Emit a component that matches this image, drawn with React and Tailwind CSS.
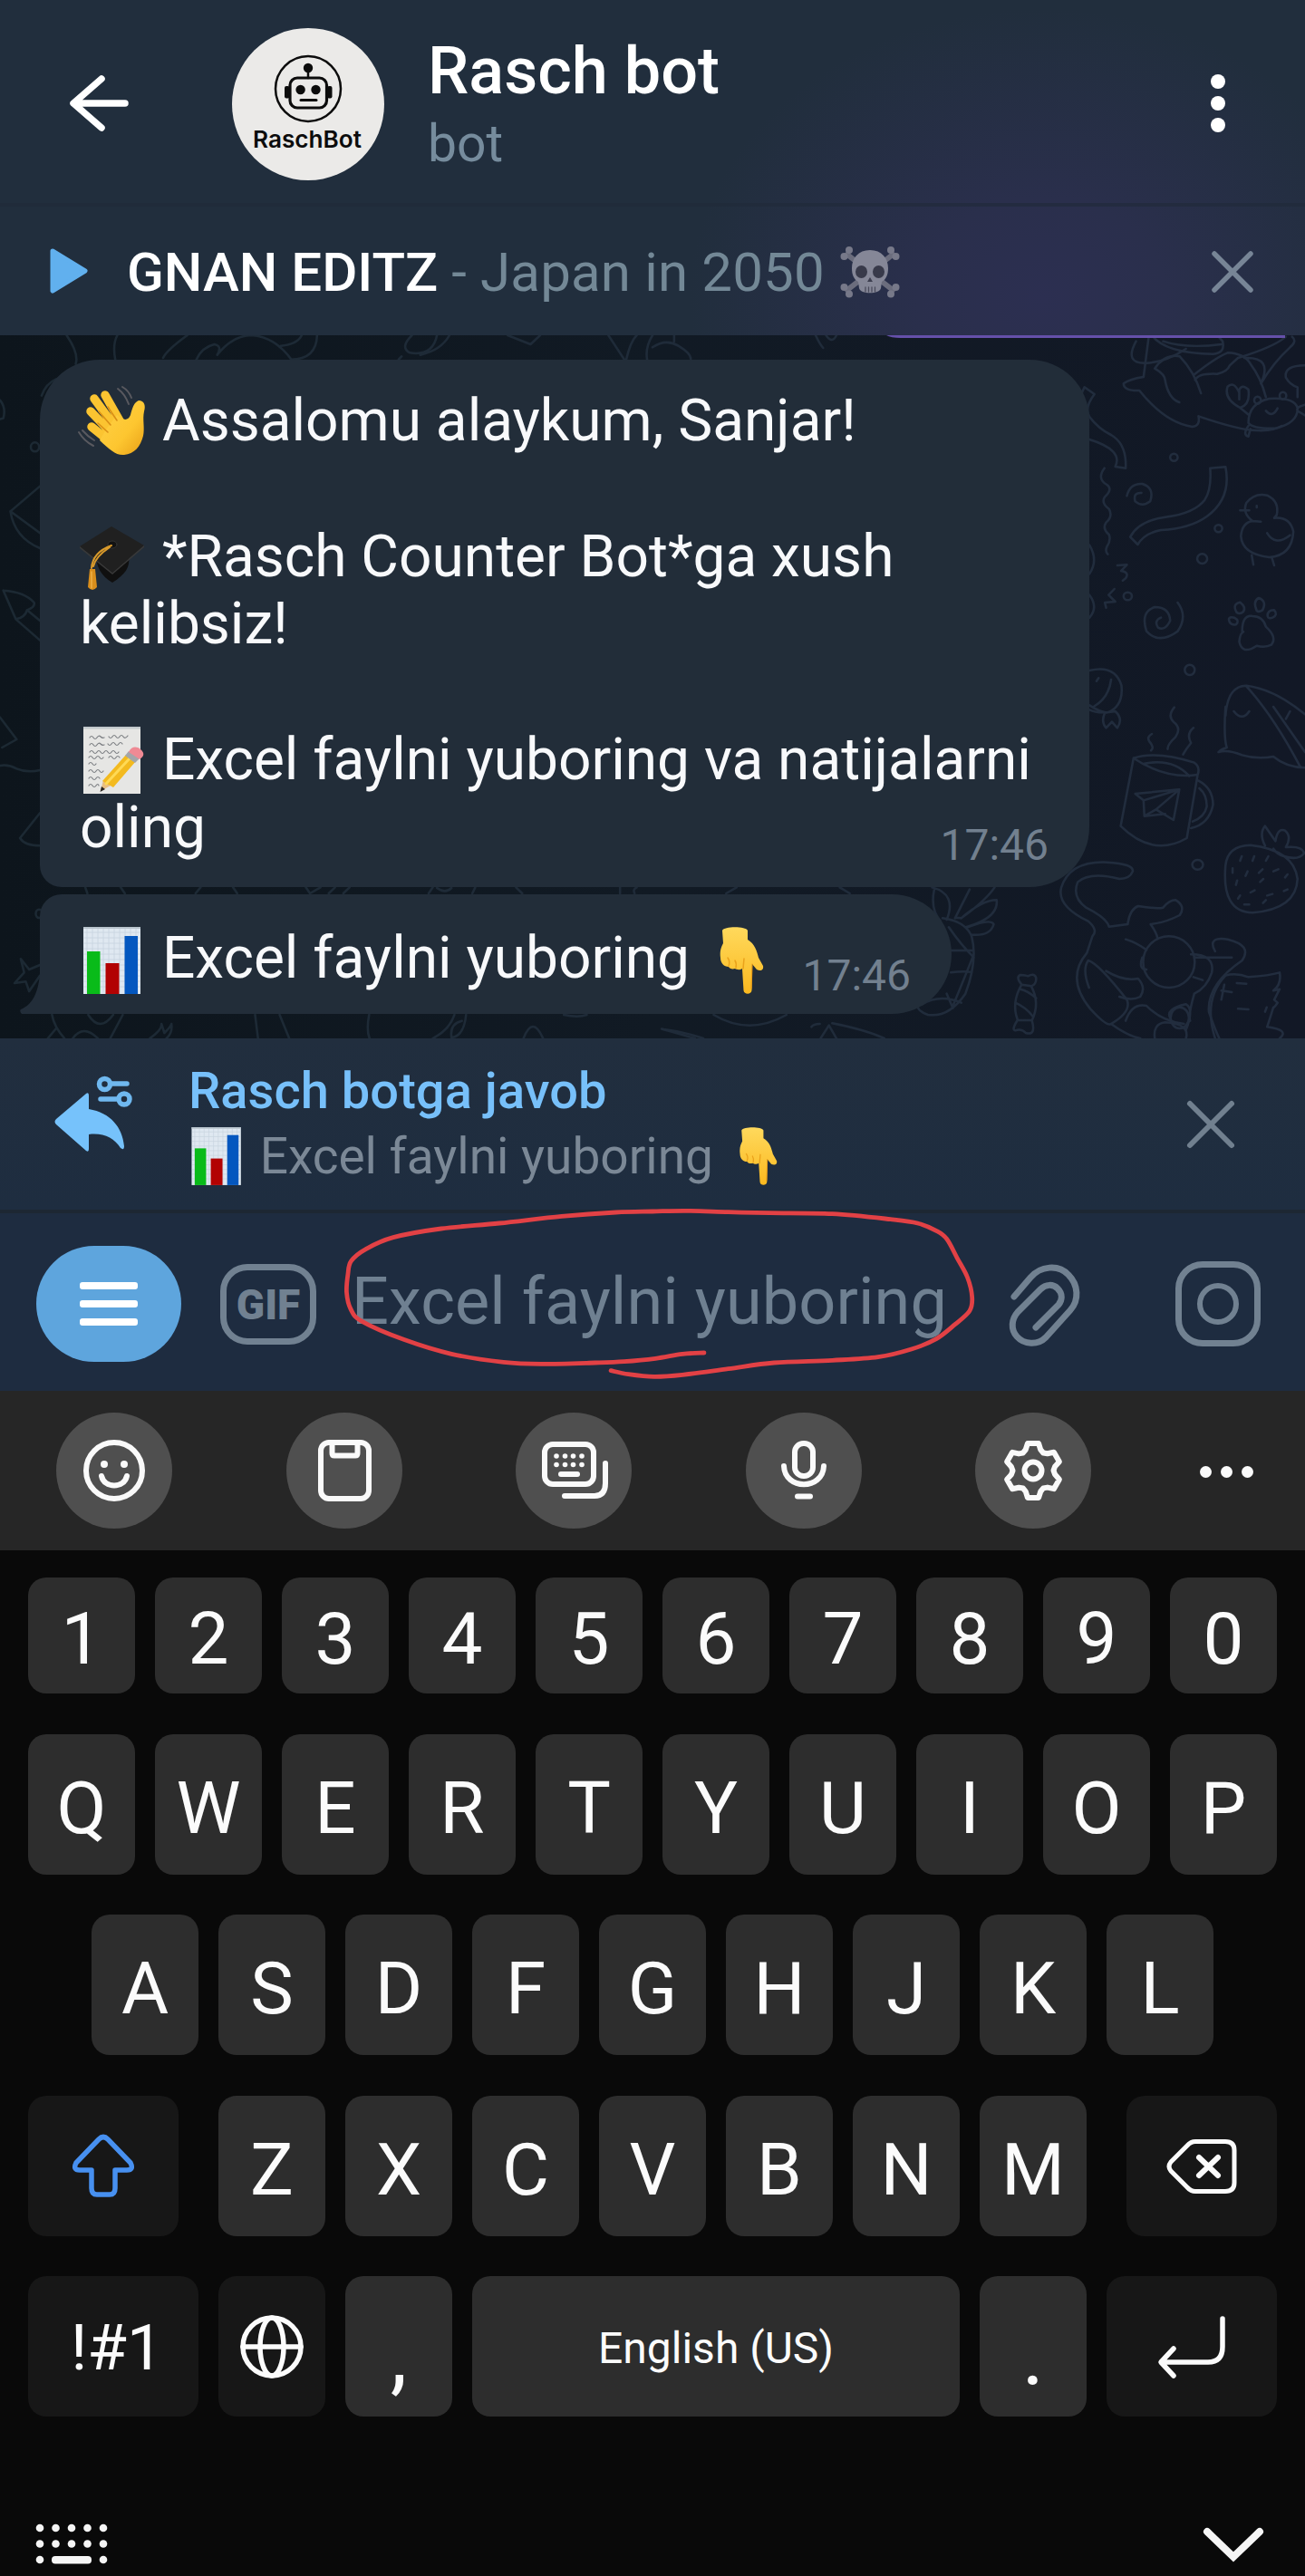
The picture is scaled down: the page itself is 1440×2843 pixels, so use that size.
import React from "react";

const svgBase = { fill: "none", strokeLinecap: "round", strokeLinejoin: "round" };

// Turns a list of points into a smooth path (Catmull-Rom to cubic Bezier).
function smooth(points) {
  let d = `M${points[0][0]} ${points[0][1]}`;
  for (let i = 0; i < points.length - 1; i++) {
    const p0 = points[i - 1] || points[i];
    const p1 = points[i];
    const p2 = points[i + 1];
    const p3 = points[i + 2] || p2;
    const c1 = [p1[0] + (p2[0] - p0[0]) / 6, p1[1] + (p2[1] - p0[1]) / 6];
    const c2 = [p2[0] - (p3[0] - p1[0]) / 6, p2[1] - (p3[1] - p1[1]) / 6];
    d += ` C${c1[0]} ${c1[1]} ${c2[0]} ${c2[1]} ${p2[0]} ${p2[1]}`;
  }
  return d;
}

/* ---------- Emoji drawings ---------- */

const EMOJI_LG = "inline w-[73px] h-[74px] -my-[6px] mr-[2px] align-[-12px] overflow-visible";
const EMOJI_SM = "inline w-[63px] h-[64px] -my-[6px] mr-[2px] align-[-7px] overflow-visible";

function WaveEmoji() {
  return (
    <svg viewBox="0 0 73 74" className={EMOJI_LG} {...svgBase}>
      <defs>
        <linearGradient id="wave" x1="0" y1="0" x2="1" y2="1">
          <stop offset="0" stopColor="#ffd24a" />
          <stop offset="0.6" stopColor="#fdc630" />
          <stop offset="1" stopColor="#e89f16" />
        </linearGradient>
      </defs>
      <path d="M42 -1 Q50 5 54 16 M47 -3 Q54 1 57 9" stroke="#59595f" strokeWidth="2" />
      <path d="M-1 47 Q5 57 15 62 M3 45 Q9 52 16 56" stroke="#59595f" strokeWidth="2" />
      <path d="M28 6 L45 36 M16 10 L38 40 M12 24 L34 47 M13 41 L34 58" stroke="#fbc431" strokeWidth="9.5" />
      <path d="M29 44 L41 28 C48 34 53 35 56 28 C58 20 60 14 65 12 C71 12 73 17 71 24 C69 33 72 42 70 51 C67 63 60 71 49 72 C40 73 33 66 22 56 Z" fill="url(#wave)" />
      <path d="M31 19 L41 34 M21 24 L34 39 M20 37 L31 47" stroke="#d98f16" strokeWidth="1.6" />
    </svg>
  );
}

function CapEmoji() {
  return (
    <svg viewBox="0 0 73 74" className={EMOJI_LG} {...svgBase}>
      <path d="M18 32 L54 34 C56 46 50 54 36 63 C24 56 18 46 18 32 Z" fill="#101010" />
      <path d="M35 1 L71 22 L36 52 L0 23 Z" fill="#202020" />
      <path d="M0 23 L36 52 L71 22 L71 24 L36 54 L0 25 Z" fill="#383838" />
      <ellipse cx="36" cy="21" rx="5" ry="4" fill="#121212" stroke="#333333" strokeWidth="1" />
      <path d="M35 22 C24 26 14 33 13 47 M33 24 C24 30 17 36 15 45" stroke="#d99a2b" strokeWidth="2" />
      <path d="M11 48 H17 L19 68 Q14 74 9 68 Z" fill="#d98e1c" />
      <path d="M13 51 V69" stroke="#f0b44a" strokeWidth="1.4" />
    </svg>
  );
}

function MemoEmoji() {
  return (
    <svg viewBox="0 0 73 74" className={EMOJI_LG} {...svgBase}>
      <rect x="4" y="-2" width="63" height="74" fill="#e6e6e4" />
      <rect x="4" y="-2" width="63" height="2.5" fill="#c3c9cc" />
      <path
        d="M11 10 q2 -3 4 0 t4 0 t4 -1 t4 1 M32 9 q2 3 4 0 t4 0 t4 0 t4 0 t5 -1 M11 18 q2 -3 4 0 t4 0 t4 -1 t4 1 M31 17 q2 3 4 0 t4 0 t4 0 t4 0 M11 26 q2 -3 4 0 t4 0 t4 0 t4 0 t4 0 t4 0 t4 0 t4 0 M10 32 q2 -3 4 0 t4 0 t4 0 t4 0 M32 32 q2 -3 4 0 t4 0 t4 0 M10 39 q2 -3 4 0 t4 0 M10 47 q2 -3 4 0 t4 0 t4 0 t4 0 M10 55 q2 -3 4 0 t4 0 t4 0 M10 63 q2 -3 4 0 t4 0 t3 0"
        stroke="#7b7e82"
        strokeWidth="1.2"
      />
      <path d="M23 69 L26 57 L34 63 Z" fill="#e8bd82" />
      <path d="M22.500 70 L24 64 L28 67 Z" fill="#2b2622" />
      <path d="M25 58 L51 29 L62 36 L37 65 Z" fill="#f3ba1f" />
      <path d="M29 61 L56 32" stroke="#ffda55" strokeWidth="3" />
      <path d="M50 30 L54 25 L66 33 L61 38 Z" fill="#a3a6aa" />
      <path d="M54 26 C57 20 62 19 67 23 C72 27 71 31 66 34 Z" fill="#ef8a94" />
    </svg>
  );
}

function ChartEmoji({ className = EMOJI_LG }) {
  return (
    <svg viewBox="0 0 73 74" className={className} {...svgBase}>
      <rect x="4" y="0" width="63" height="74" fill="#dfe8f1" />
      <path
        d="M8 2 V72 M14 2 V72 M20 2 V72 M26 2 V72 M32 2 V72 M38 2 V72 M44 2 V72 M50 2 V72 M56 2 V72 M62 2 V72 M5 6 H66 M5 12 H66 M5 18 H66 M5 24 H66 M5 30 H66 M5 36 H66 M5 42 H66 M5 48 H66 M5 54 H66 M5 60 H66 M5 66 H66"
        stroke="#c7d3df"
        strokeWidth="0.8"
      />
      <rect x="4" y="0" width="63" height="2" fill="#b9c4cd" />
      <rect x="8" y="27" width="14.500" height="47" fill="#09bb19" />
      <rect x="28.500" y="40" width="15" height="34" fill="#b20202" />
      <rect x="49.500" y="10" width="14.500" height="64" fill="#0457bf" />
    </svg>
  );
}

function PointDownEmoji({ className = EMOJI_LG }) {
  return (
    <svg viewBox="-2 0 73 74" className={className} {...svgBase}>
      <defs>
        <linearGradient id="point" x1="0" y1="0" x2="0" y2="1">
          <stop offset="0" stopColor="#ffd95c" />
          <stop offset="1" stopColor="#fbb91f" />
        </linearGradient>
      </defs>
      <path
        d="M18 4 C20 -1 44 -1 46 4 L46 14 C54 19 56 26 58 34 L63 43 C64 48 60 49 56 47 L51 41 L50.500 70 C50 75 42 75 41.500 70 L40 46 C37 48 34 47 32 46 C29 47 26 46 25 44 C20 44 16 40 16 34 C15 26 17 22 19 18 Z"
        fill="url(#point)"
      />
      <path d="M25 43 Q27 38 24 34 M33 45 Q34 40 32 37 M41 46 L42 35" stroke="#eaa21b" strokeWidth="1.500" />
      <path d="M51 41 L50 68" stroke="#e89c18" strokeWidth="1.200" />
    </svg>
  );
}

function SkullEmoji() {
  return (
    <svg viewBox="0 0 66 57" className="w-[66px] h-[57px] ml-[2px] mb-[1px]" {...svgBase}>
      <path d="M8 9 L58 48 M58 9 L8 48" stroke="#6b6d7d" strokeWidth="6" />
      <g fill="#777989">
        <circle cx="10" cy="4" r="4" />
        <circle cx="4.500" cy="11" r="4" />
        <circle cx="56" cy="4" r="4" />
        <circle cx="61.500" cy="11" r="4" />
        <circle cx="4.500" cy="45" r="4" />
        <circle cx="10" cy="52.500" r="4" />
        <circle cx="61.500" cy="45" r="4" />
        <circle cx="56" cy="52.500" r="4" />
      </g>
      <path
        d="M33 4 C46 4 53 13 53 24 C53 31 51 36 46 39 L45 46 C44 53 22 53 21 46 L20 39 C15 36 13 31 13 24 C13 13 20 4 33 4 Z"
        fill="#858797"
      />
      <ellipse cx="23.500" cy="28" rx="6.500" ry="7" fill="#383a4a" />
      <ellipse cx="42.500" cy="28" rx="6.500" ry="7" fill="#383a4a" />
      <path d="M33 34 L30 39 H36 Z" fill="#3d3f50" />
      <path d="M28 45 V50 M31.500 45 V50 M35 45 V50 M38.500 45 V50" stroke="#4a4c5c" strokeWidth="1.300" />
    </svg>
  );
}

/* ---------- Header ---------- */

function Avatar() {
  return (
    <div className="w-[168px] h-[168px] rounded-full bg-[#ebeae8] shrink-0">
      <svg viewBox="0 0 168 168" className="w-full h-full" {...svgBase}>
        <circle cx="84" cy="67" r="36" stroke="#0c0c0c" strokeWidth="2.500" />
        <circle cx="84" cy="44" r="5.200" fill="#0c0c0c" />
        <path d="M84 46 V55" stroke="#0c0c0c" strokeWidth="2.500" />
        <rect x="64" y="55" width="40.500" height="33" rx="8" stroke="#0c0c0c" strokeWidth="3.200" />
        <rect x="58" y="64" width="5.500" height="13.500" rx="2" fill="#0c0c0c" />
        <rect x="105" y="64" width="5.500" height="13.500" rx="2" fill="#0c0c0c" />
        <circle cx="75.600" cy="68" r="5.200" fill="#0c0c0c" />
        <circle cx="92.500" cy="68" r="5.200" fill="#0c0c0c" />
        <path d="M76 79.500 H93" stroke="#0c0c0c" strokeWidth="3" />
        <text
          x="83"
          y="132"
          textAnchor="middle"
          textLength="120"
          lengthAdjust="spacingAndGlyphs"
          className="font-['Inter'] font-semibold text-[26px]"
          fill="#0c0c0c"
        >
          RaschBot
        </text>
      </svg>
    </div>
  );
}

function Header() {
  return (
    <header className="flex items-start h-[228px] pl-[76px] pr-[88px] border-b-4 border-[#1f2a38]/60">
      <svg viewBox="0 0 68 64" className="w-[68px] h-[64px] mt-[82px]" {...svgBase} stroke="#ffffff" strokeWidth="7.500">
        <path d="M36 5 L5 32 L36 59 M6 32 H62" />
      </svg>
      <div className="ml-[112px] mt-[31px]">
        <Avatar />
      </div>
      <div className="ml-[48px] flex flex-col whitespace-nowrap">
        <h1 className="mt-[35px] text-[72px] leading-[88px] font-medium text-white">Rasch bot</h1>
        <p className="mt-[1px] text-[57px] leading-[70px] text-[#768c9d]">bot</p>
      </div>
      <div className="ml-auto mt-[82px] flex flex-col gap-[8px]">
        <span className="w-4 h-4 rounded-full bg-white" />
        <span className="w-4 h-4 rounded-full bg-white" />
        <span className="w-4 h-4 rounded-full bg-white" />
      </div>
    </header>
  );
}

function PlayerBar() {
  return (
    <div className="flex items-center h-[142px] pl-[54px] pr-[55px]">
      <svg viewBox="0 0 44 52" className="w-[44px] h-[52px]" {...svgBase}>
        <path d="M4 4 L40 26 L4 48 Z" fill="#61b0ee" stroke="#61b0ee" strokeWidth="5" />
      </svg>
      <div className="ml-[42px] mt-[3px] flex items-center whitespace-pre text-[60px] leading-[72px]">
        <span className="font-medium text-white">GNAN EDITZ</span>
        <span className="text-[#738896] tracking-[0.17px]"> - Japan in 2050 </span>
        <SkullEmoji />
      </div>
      <svg viewBox="0 0 50 50" className="ml-auto w-[50px] h-[50px] mt-[1px]" {...svgBase} stroke="#778596" strokeWidth="5.500">
        <path d="M5 5 L45 45 M45 5 L5 45" />
      </svg>
    </div>
  );
}

/* ---------- Chat ---------- */

const DOODLES = [
  // top edge, left side
  "M160 0 Q190 60 182 95 M277 80 Q270 30 282 0 M392 75 Q400 50 450 0 M472 80 Q485 40 515 30 Q535 35 522 65 Q560 0 605 0 Q660 5 700 80 Q760 80 762 0 M675 35 Q715 30 725 0",
  "M990 0 Q960 40 985 58 Q1040 70 1050 0 M1080 0 Q1060 50 1010 65 M965 70 L958 80 M1220 0 L1275 30 L1298 0 M1462 0 L1500 80 M1568 0 Q1550 40 1555 80 M1505 80 Q1515 20 1530 0",
  "M1568 40 Q1600 10 1630 35 Q1660 60 1660 78 M1620 20 V0 M1960 0 Q1970 30 1978 42 M1985 0 Q2000 30 2010 0",
  // left margin
  "M100 200 Q110 160 135 145 M0 215 Q15 240 8 275 L0 278 M96 500 L25 583 L96 655 M25 583 Q35 670 96 705 M8 845 L38 940 L96 1010 M8 845 Q60 850 82 885 Q85 900 65 910 Q60 935 38 940 M65 910 L96 945",
  "M0 1265 L40 1338 L5 1365 M0 1425 Q20 1420 40 1435 Q65 1450 96 1440 M96 1582 L48 1665 Q60 1690 96 1690 M96 2085 L70 2100 L50 2065 L58 2110 L35 2145 L62 2140 L70 2172 L96 2120",
  // seams under the bubbles
  "M205 1828 L210 1848 M290 1828 L300 1848 M470 1848 L482 1828 M560 1828 L570 1848 M735 1828 L745 1848 L770 1828 M790 1848 L805 1828 M825 1848 L840 1828 M1030 1848 L1040 1828 M1050 1830 Q1070 1850 1085 1830 M1135 1848 L1142 1828 M1240 1828 L1255 1848 M1490 1848 V1828 M1525 1848 Q1520 1835 1530 1828 M1745 1848 L1770 1828 M2018 1828 L2042 1848",
  "M125 2250 Q130 2290 155 2328 M295 2250 L265 2328 M212 2250 Q240 2310 272 2250 M115 2328 L135 2295 M175 2328 Q200 2280 235 2328 M360 2328 Q390 2300 388 2280 L395 2310 Q410 2290 412 2280 Q415 2310 400 2328 M613 2250 L620 2328 M672 2250 L695 2328 M887 2250 Q880 2300 888 2328 M1092 2250 Q1080 2300 1040 2328 M1120 2250 Q1115 2320 1085 2325 Q1080 2280 1110 2270 M1258 2328 Q1280 2250 1305 2328 M1355 2250 Q1390 2260 1410 2250",
  "M1715 2250 Q1800 2320 1890 2250 M1670 2328 Q1570 2290 1595 2298 Q1640 2305 1690 2328 M1950 2290 Q1955 2280 1970 2280 M1972 2328 L1992 2285 L2010 2328 M2000 2278 Q2080 2300 2125 2328",
  // bird, bow and crab
  "M2768 0 Q2800 60 2915 62 Q2945 60 2938 20 L2925 0 M2795 20 Q2850 45 2935 30 M2730 20 Q2700 95 2755 92 Q2800 90 2850 45 M2760 10 L2748 138 Q2715 145 2700 160 Q2700 185 2738 183 Q2800 290 2865 303 Q2885 300 2880 268 Q2980 315 3020 315 Q3060 318 3080 300",
  "M2775 110 Q2800 60 2835 70 Q2870 120 2886 192 M2775 110 Q2800 130 2800 150 Q2808 210 2834 222 M2870 130 Q2920 75 2950 58 Q2990 60 3005 95 Q3030 140 3042 205 M2872 148 Q2880 125 2925 128 Q2950 120 2955 100 L2975 75 Q3060 40 3090 5 M2990 75 Q3060 70 3030 160 Q3060 90 3100 40 Q3118 20 3105 5",
  "M3000 290 Q3000 225 3050 210 Q3110 205 3118 240 Q3120 290 3065 308 Q3010 310 3000 290 M3042 250 Q3058 275 3070 242 M2980 240 Q2940 210 2950 170 Q2965 150 2978 190 V212 V180 Q2985 160 3000 180 Q3005 230 2980 240 L3002 265 M3136 100 Q3085 100 3090 140 Q3100 165 3118 172 V205 M3000 300 Q2985 330 3000 335 L3005 310 M3136 230 Q3110 240 3120 252 L3136 265",
  // ribbons, spirals, squiggles
  "M2600 190 L2606 172 L2630 195 Q2605 240 2618 270 Q2640 310 2670 330 Q2708 360 2705 440 L2680 435 Q2700 380 2618 345 M2908 440 L2945 436 Q2960 540 2900 600 Q2860 640 2790 645 Q2750 655 2734 693 L2716 668 Q2735 615 2800 602 Q2870 590 2895 545 Q2912 510 2908 440",
  "M2654 440 Q2635 475 2660 495 Q2675 510 2655 535 Q2645 555 2665 575 Q2675 600 2658 620 Q2648 640 2665 660 Q2670 680 2660 700 Q2655 715 2662 725 M2708 532 Q2715 490 2745 492 Q2775 505 2764 550 Q2745 570 2728 550 Q2722 520 2743 522 M2830 885 Q2855 930 2830 980 Q2785 1025 2755 980 Q2740 915 2775 900 Q2810 900 2812 945 Q2800 980 2783 968 Q2772 945 2790 935",
  "M2685 762 L2708 760 L2694 780 Q2715 785 2705 805 L2698 812 M2678 840 L2664 860 L2680 882 L2655 885 L2658 902 M2618 695 Q2640 745 2618 790 M2618 860 Q2640 900 2618 935",
  // chick
  "M3010 615 Q2985 590 2995 555 Q3015 520 3045 530 Q3075 550 3068 595 L3062 605 Q3100 600 3108 650 Q3105 730 3050 735 Q2985 725 2982 665 Q2985 620 3010 615 L3030 617 M2980 580 H3002 M3020 565 V570 M3045 655 Q3065 700 3100 662 M3008 728 L3012 760 M3056 735 L3062 762",
  // paw
  "M2985 980 Q2985 925 3010 930 Q3035 930 3042 965 Q3070 1000 3055 1025 Q3040 1035 3020 1028 Q2985 1060 2978 1015 Q2980 985 2988 982 M2972 918 Q2960 890 2980 884 Q2995 900 2988 915 Q2980 925 2972 918 M3020 912 Q3010 880 3025 870 Q3045 880 3034 910 Q3025 918 3020 912 M3046 930 Q3045 910 3062 910 Q3072 925 3058 935 Q3048 940 3046 930 M2955 950 Q2948 930 2966 935 Q2980 945 2970 958 Q2960 960 2955 950",
  // candy, shell
  "M2618 1110 Q2680 1090 2695 1160 Q2700 1230 2660 1250 Q2640 1245 2618 1225 M2670 1140 Q2665 1200 2628 1230 M2640 1135 L2635 1145 M2618 1240 Q2640 1255 2680 1245 Q2700 1270 2685 1300 L2672 1280 L2658 1300 Q2645 1280 2655 1250 M2945 1260 Q2950 1160 2995 1160 Q3060 1170 3136 1255 M2995 1162 Q3060 1260 3125 1430 M2945 1230 Q2940 1330 2948 1365 Q2935 1370 2928 1380 Q2950 1370 2985 1390 Q3020 1405 3060 1395 Q3090 1430 3136 1432 M2965 1245 Q2985 1280 3002 1245 M3090 1270 L3100 1245 M3060 1230 L3136 1380",
  // mug with paper plane
  "M2724 1400 Q2780 1375 2870 1415 Q2885 1430 2878 1455 Q2800 1470 2724 1400 L2693 1625 Q2770 1730 2852 1665 L2878 1455 M2750 1418 Q2820 1400 2858 1460 M2880 1475 Q2915 1500 2915 1555 Q2905 1620 2862 1632 M2882 1500 Q2900 1520 2900 1560 Q2895 1595 2866 1610 M2728 1518 L2834 1504 L2820 1605 L2778 1570 L2834 1504 L2748 1540 Z M2748 1540 L2750 1592 L2778 1570 M2750 1592 L2800 1585 M2766 1375 Q2775 1365 2762 1345 Q2755 1330 2768 1320 M2806 1370 Q2805 1355 2825 1330 Q2840 1300 2820 1280 Q2805 1260 2822 1232 M2843 1388 Q2850 1370 2862 1350 Q2850 1320 2868 1300",
  // strawberry
  "M2945 1755 Q2950 1690 3005 1688 Q3110 1705 3118 1800 Q3115 1900 3010 1912 Q2935 1910 2945 1755 M3040 1690 Q3025 1650 3040 1625 L3065 1675 Q3070 1630 3088 1640 Q3105 1660 3090 1695 Q3130 1690 3134 1715 Q3120 1740 3085 1725 Q3070 1720 3060 1700",
  "M2980 1740 L2984 1725 M3010 1740 L3014 1725 M3042 1740 L3048 1725 M2962 1780 V1765 M2993 1790 L2998 1775 M3025 1780 L3034 1768 M3060 1775 L3072 1768 M2970 1820 L2973 1805 M3028 1810 L3036 1800 M3088 1795 L3094 1785 M2975 1865 L2980 1855 M3005 1845 L3015 1838 M3045 1855 L3058 1850 M3085 1840 L3094 1835 M2990 1885 H3002 M3035 1880 L3042 1870",
  // pineapple
  "M2245 1835 Q2235 1900 2260 1940 M2240 1828 Q2300 1850 2275 1935 M2390 1828 Q2370 1870 2310 1930 L2296 1928 M2330 1835 L2295 1930 M2310 1930 Q2360 1870 2395 1870 Q2400 1930 2320 1960 M2325 1960 Q2380 1930 2388 1950 Q2380 1990 2335 1985 M2265 1930 Q2320 1940 2335 1990 Q2350 2070 2320 2180 Q2280 2260 2230 2250 Q2210 2240 2205 2225 M2280 1960 Q2310 2020 2340 2060 M2285 2037 H2338 M2285 2110 Q2310 2105 2335 2108 M2215 2215 Q2260 2180 2310 2210 M2275 2180 L2290 2228 M2340 2050 Q2320 2120 2290 2220",
  // wrapped sweet
  "M2455 2150 Q2440 2125 2452 2118 Q2468 2120 2470 2122 Q2488 2110 2490 2130 Q2490 2150 2478 2155 Z M2455 2150 Q2430 2210 2445 2265 M2478 2155 Q2500 2210 2480 2268 L2445 2268 Q2430 2300 2440 2302 Q2455 2295 2465 2310 Q2490 2320 2480 2270 M2452 2165 Q2470 2170 2490 2195 M2440 2210 Q2465 2225 2482 2255",
  // cat
  "M2625 1990 Q2640 1970 2615 1940 Q2540 1890 2550 1830 Q2570 1740 2660 1745 Q2725 1750 2722 1775 Q2715 1800 2690 1800 Q2620 1775 2590 1810 Q2575 1860 2610 1895 Q2660 1930 2665 1958 L2710 1950 Q2715 1900 2735 1890 Q2780 1900 2795 1895 Q2810 1870 2825 1870 Q2850 1890 2835 1920 Q2800 1945 2765 1950 Q2780 1980 2782 1998 M2625 1990 L2612 2045 Q2560 2130 2620 2230 Q2660 2290 2670 2280 Q2720 2240 2708 2200 Q2640 2080 2615 2070 Q2600 2100 2617 2160",
  "M2705 2000 Q2730 2010 2755 2035 M2658 2105 Q2700 2140 2735 2130 Q2755 2160 2740 2190 Q2720 2205 2690 2190 M2705 2270 Q2720 2210 2755 2220 Q2790 2270 2845 2280 M2670 2280 Q2710 2320 2740 2328 M2775 2328 Q2770 2280 2800 2275 Q2860 2280 2850 2328 M2870 2060 H2960 M2920 2040 Q2900 1990 2950 2000 Q3010 2020 2985 2070 Q2900 2150 2905 2240 Q2920 2300 2930 2328 M2868 2125 L2890 2135 M2862 2050 Q2920 2050 2912 2110 Q2900 2160 2870 2180 Q2855 2250 2860 2270 M2812 2260 Q2800 2230 2850 2215 Q2870 2230 2850 2300 M2755 2100 Q2735 2100 2745 2060",
  // kitten
  "M2945 2120 Q2970 2110 3000 2125 Q3050 2120 3075 2110 Q3080 2150 3060 2170 L3075 2165 L3062 2200 L3070 2210 Q3060 2230 3060 2225 Q3050 2270 3045 2290 Q3100 2300 3075 2328 M2945 2120 Q2890 2200 2920 2328 M2972 2145 L2995 2147 M2975 2230 L3000 2232 M2935 2170 L2960 2175 M2942 2150 L2935 2200 M3040 2240 L3044 2225",
];

const RINGS = [
  [84, 370, 10, 15], [2821, 404, 9, 12], [2928, 640, 9, 12], [2889, 740, 12, 16], [2710, 864, 10, 13],
  [2859, 1108, 12, 17], [2878, 1753, 13, 16], [2809, 2075, 62, 85], [3022, 215, 8, 12], [3083, 200, 8, 12],
  [94, 1915, 8, 14], [2835, 2260, 22, 35],
];

function ChatWallpaper() {
  return (
    <svg
      viewBox="0 0 3136 2328"
      preserveAspectRatio="none"
      className="absolute inset-0 w-full h-full"
      {...svgBase}
      stroke="url(#doodle)"
      strokeWidth="2.500"
    >
      <defs>
        <linearGradient id="doodle" gradientUnits="userSpaceOnUse" x1="0" y1="0" x2="3136" y2="0">
          <stop offset="0" stopColor="#1c2933" />
          <stop offset="1" stopColor="#222d3f" />
        </linearGradient>
      </defs>
      {DOODLES.map((d, i) => (
        <path key={i} d={d} vectorEffect="non-scaling-stroke" />
      ))}
      {RINGS.map(([cx, cy, rx, ry], i) => (
        <ellipse key={i} cx={cx} cy={cy} rx={rx} ry={ry} vectorEffect="non-scaling-stroke" />
      ))}
    </svg>
  );
}

function Chat() {
  return (
    <main className="relative h-[776px] bg-gradient-to-r from-[#0d151c] via-[#111a24] to-[#121826] overflow-hidden">
      <ChatWallpaper />
      <svg
        viewBox="0 0 440 4"
        preserveAspectRatio="none"
        className="absolute left-[978px] top-0 w-[440px] h-[3px]"
      >
        <path d="M0 0 H440 V4 H16 Q5 4 0 0 Z" fill="#6550aa" />
      </svg>
      <div className="relative flex flex-col items-start gap-[8px] pt-[27px] pl-[44px] text-[64px] text-[#f8f9fb]">
        <section className="w-[1158px] h-[582px] rounded-[66px] rounded-bl-[24px] bg-[#222d39] pt-[31px] pl-[44px] pr-[45px] leading-[74.8px]">
          <p className="whitespace-pre">
            <WaveEmoji />
            {" Assalomu alaykum, Sanjar!\n\n"}
            <CapEmoji />
            {" *Rasch Counter Bot*ga xush\nkelibsiz!\n\n"}
            <MemoEmoji />
            {" Excel faylni yuboring va natijalarni"}
          </p>
          <div className="flex justify-between">
            <p>oling</p>
            <time className="mt-[24px] text-[48px] leading-[64px] text-[#72808f]">17:46</time>
          </div>
        </section>
        <section className="relative flex justify-between w-[1006px] h-[132px] rounded-[66px] rounded-tl-[24px] rounded-bl-none bg-[#222d39] pt-[34px] pl-[44px] pr-[45px]">
          <svg viewBox="0 0 24 44" className="absolute left-[-22px] bottom-0 w-[24px] h-[44px]">
            <path d="M24 0 H22 C20 22 13 34 1 39 Q-1 41 2 44 H24 Z" fill="#222d39" />
          </svg>
          <p className="whitespace-pre leading-[74.8px]">
            <ChartEmoji />
            {" Excel faylni yuboring "}
            <PointDownEmoji />
          </p>
          <time className="mt-[24px] text-[48px] leading-[64px] text-[#72808f]">17:46</time>
        </section>
      </div>
    </main>
  );
}

/* ---------- Reply and input ---------- */

function ReplyBar() {
  return (
    <div className="flex items-start h-[193px] pl-[58px] pr-[76px] bg-gradient-to-b from-[#212e3e] to-[#1e2d40] border-b-4 border-[#1d2733]">
      <svg viewBox="0 0 90 88" className="w-[90px] h-[88px] mt-[40px]" {...svgBase}>
        <path
          d="M37 21 L4 49 Q1 52 4 55 L37 84 Q40 86 40 82 V66 C56 64 68 70 75 81 Q79 84 79 79 C77 58 64 42 40 38 V23 Q40 19 37 21 Z"
          fill="#76c2fb"
        />
        <g stroke="#6fb8ef" strokeWidth="5.500">
          <circle cx="57.500" cy="10.500" r="6" />
          <path d="M65 10 H82 M53 27 H70" />
          <circle cx="79" cy="27" r="6" />
        </g>
      </svg>
      <div className="ml-[60px] whitespace-pre">
        <p className="mt-[24px] text-[56px] leading-[68px] font-medium text-[#77c0fa] tracking-[0.05px]">Rasch botga javob</p>
        <p className="mt-[4px] text-[55px] leading-[68px] text-[#7b8896]">
          <ChartEmoji className={EMOJI_SM} />
          {" Excel faylni yuboring "}
          <PointDownEmoji className={EMOJI_SM} />
        </p>
      </div>
      <svg viewBox="0 0 56 56" className="ml-auto w-[56px] h-[56px] mt-[67px]" {...svgBase} stroke="#71808f" strokeWidth="6">
        <path d="M5 5 L51 51 M51 5 L5 51" />
      </svg>
    </div>
  );
}

const MARKER = [
  [1692, 1089], [1640, 1093], [1575, 1108], [1500, 1118], [1430, 1122], [1300, 1126], [1210, 1120], [1085, 1093],
  [970, 1045], [870, 985], [843, 945], [833, 890], [836, 830], [844, 785], [880, 745], [945, 707],
  [1060, 678], [1200, 660], [1350, 637], [1480, 624], [1568, 621], [1650, 619], [1750, 623], [1850, 626],
  [2000, 629], [2140, 647], [2205, 660], [2250, 685], [2275, 712], [2300, 775], [2325, 840], [2336, 905],
  [2330, 950], [2295, 995], [2250, 1043], [2190, 1077], [2110, 1103], [2000, 1114], [1860, 1122],
  [1750, 1142], [1640, 1162], [1572, 1168], [1510, 1160], [1468, 1148],
];

function InputBar() {
  return (
    <div className="relative flex items-center h-[196px] pl-[40px] pr-[49px] bg-[#1e2c40]">
      <button className="flex flex-col items-center justify-center gap-[12px] w-[160px] h-[128px] mt-[4px] rounded-[64px] bg-[#5ea5dd]">
        <span className="w-[64px] h-[8px] rounded-[3px] bg-white" />
        <span className="w-[64px] h-[8px] rounded-[3px] bg-white" />
        <span className="w-[64px] h-[8px] rounded-[3px] bg-white" />
      </button>
      <div className="ml-[43px] mt-[5px] flex items-center justify-center w-[106px] h-[89px] rounded-[30px] border-[7px] border-[#718191] text-[46px] leading-none font-black text-[#718191]">
        GIF
      </div>
      <span className="ml-[39px] text-[72px] leading-[88px] text-[#6f8091] tracking-[0.1px] whitespace-nowrap">Excel faylni yuboring</span>
      <svg viewBox="0 0 84 96" className="ml-auto w-[84px] h-[96px] mt-[5px]" {...svgBase} stroke="#718191" strokeWidth="7">
        <path d="M9 39 L27 18 C38 5 58 3 69 15 C80 26 81 43 71 54 L44 84 C35 93 20 92 12 83 C5 75 6 64 13 56 L38 31 C44 25 52 25 57 30 C63 36 62 43 58 48 L33 73" />
      </svg>
      <div className="ml-[103px] mt-[4px] flex items-center justify-center w-[94px] h-[94px] rounded-[30px] border-[7px] border-[#718191]">
        <span className="w-[46px] h-[46px] rounded-full border-[6.5px] border-[#718191]" />
      </div>
      <svg
        viewBox="0 615 3136 588"
        preserveAspectRatio="none"
        className="absolute left-0 -top-[4px] w-full h-[196px] overflow-visible"
        {...svgBase}
      >
        <path d={smooth(MARKER)} stroke="#e24145" strokeWidth="4.800" vectorEffect="non-scaling-stroke" />
      </svg>
    </div>
  );
}

/* ---------- Keyboard ---------- */

const gearPath = (() => {
  const teeth = 6;
  const pts = [];
  for (let i = 0; i < teeth; i++) {
    const a = (i * 60 - 90) * (Math.PI / 180);
    [[-0.2, 30.5], [0.2, 30.5], [0.34, 24.5], [0.52, 22.5], [0.7, 24.5]].forEach(([da, r]) => {
      pts.push(`${(64 + r * Math.cos(a + da)).toFixed(1)} ${(64 + r * Math.sin(a + da)).toFixed(1)}`);
    });
  }
  return `M${pts.join(" L")} Z`;
})();

const TOOLS = [
  <>
    <circle cx="64" cy="64" r="31" />
    <path d="M50 70 C53 84 75 84 78 70" />
    <circle cx="53" cy="57" r="4" fill="#fafafa" stroke="none" />
    <circle cx="75" cy="57" r="4" fill="#fafafa" stroke="none" />
  </>,
  <>
    <rect x="38" y="33" width="53" height="62" rx="9" />
    <path d="M50.500 34 V45 Q50.500 47.500 53 47.500 H76 Q78.500 47.500 78.500 45 V34" />
  </>,
  <>
    <rect x="32" y="35" width="54" height="44" rx="9" />
    <path d="M99 56 V78 Q99 92 87 92 H54" />
    <g fill="#fafafa" stroke="none">
      {[45, 54.5, 63.500, 73].map((x) => (
        <React.Fragment key={x}>
          <circle cx={x} cy="48" r="2.800" />
          <circle cx={x} cy="57.500" r="2.800" />
        </React.Fragment>
      ))}
      <rect x="47" y="65" width="24" height="6" rx="3" />
    </g>
  </>,
  <>
    <rect x="54" y="34" width="20" height="36" rx="9.500" />
    <path d="M42 59 C43 86 85 86 86 59" />
    <path d="M57 92.500 H71" />
  </>,
  <>
    <path d={gearPath} />
    <circle cx="64" cy="64" r="9.500" />
  </>,
];

function Toolbar() {
  return (
    <div className="flex items-center h-[176px] pl-[62px] pr-[57px] bg-[#262626]">
      <div className="flex gap-[125.5px]">
        {TOOLS.map((icon, i) => (
          <div key={i} className="w-[128px] h-[128px] rounded-full bg-[#4f4f4f]">
            <svg viewBox="0 0 128 128" className="w-full h-full" {...svgBase} stroke="#fafafa" strokeWidth="6">
              {icon}
            </svg>
          </div>
        ))}
      </div>
      <div className="ml-auto flex gap-[10px] mt-[2px]">
        <span className="w-[13px] h-[13px] rounded-full bg-[#fafafa]" />
        <span className="w-[13px] h-[13px] rounded-full bg-[#fafafa]" />
        <span className="w-[13px] h-[13px] rounded-full bg-[#fafafa]" />
      </div>
    </div>
  );
}

const KEY = "flex items-center justify-center rounded-[20px] bg-[#2d2d2d] leading-none text-[#fbfbfb]";
const SPECIAL = "flex items-center justify-center rounded-[20px] bg-[#171717] text-[#fbfbfb]";

function KeyRow({ keys, className }) {
  return (
    <div className={`flex justify-center gap-[22px] ${className}`}>
      {keys.split("").map((k) => (
        <div key={k} className={`${KEY} w-[118px] h-full pt-[8px] text-[80px]`}>
          {k}
        </div>
      ))}
    </div>
  );
}

function Keyboard() {
  return (
    <div className="h-[1132px] bg-[#090909] pt-[30px]">
      <KeyRow keys="1234567890" className="h-[128px]" />
      <KeyRow keys="QWERTYUIOP" className="h-[155px] mt-[45px]" />
      <KeyRow keys="ASDFGHJKL" className="h-[155px] mt-[44px]" />
      <div className="flex justify-between h-[155px] mt-[45px] px-[31px]">
        <div className={`${SPECIAL} w-[166px]`}>
          <svg viewBox="0 0 72 72" className="w-[72px] h-[72px]" {...svgBase} stroke="#4790f0" strokeWidth="5.500">
            <path d="M31 6 Q36 1 41 6 L66 32 Q70 40 62 40 H49 V60 Q49 67 43 67 H29 Q23 67 23 60 V40 H10 Q2 40 6 32 Z" />
          </svg>
        </div>
        <KeyRow keys="ZXCVBNM" className="h-full" />
        <div className={`${SPECIAL} w-[166px]`}>
          <svg viewBox="0 0 80 62" className="w-[80px] h-[62px]" {...svgBase} stroke="#fbfbfb" strokeWidth="5">
            <path d="M33 3.500 H66 Q76 3.500 76 13 V49 Q76 58.500 66 58.500 H33 Q28 58.500 24 54 L6 36 Q2 31 6 26 L24 8 Q28 3.500 33 3.500 Z" />
            <path d="M37 21 L58 41 M58 21 L37 41" strokeWidth="6" />
          </svg>
        </div>
      </div>
      <div className="flex gap-[22px] h-[155px] mt-[44px] px-[31px]">
        <div className={`${SPECIAL} w-[188px] pl-[8px] pt-[2px] text-[71px] leading-none`}>!#1</div>
        <div className={`${SPECIAL} w-[118px]`}>
          <svg viewBox="0 0 72 72" className="w-[72px] h-[72px]" {...svgBase} stroke="#fbfbfb" strokeWidth="5.500">
            <circle cx="36" cy="36" r="32" />
            <ellipse cx="36" cy="36" rx="13" ry="32" />
            <path d="M4 36 H68" />
          </svg>
        </div>
        <div className={`${KEY} w-[118px] pt-[18px] text-[94px]`}>,</div>
        <div className={`${KEY} w-[538px] pt-[4px] text-[48px]`}>English (US)</div>
        <div className={`${KEY} w-[118px] pt-[18px] text-[94px]`}>.</div>
        <div className={`${SPECIAL} w-[188px]`}>
          <svg viewBox="0 0 78 72" className="w-[78px] h-[72px]" {...svgBase} stroke="#fbfbfb" strokeWidth="5.500">
            <path d="M73 5 V36 Q73 53 57 53 H6 M19 38 L5 53 L19 68" />
          </svg>
        </div>
      </div>
      <div className="flex items-start justify-between mt-[114px] pl-[39px] pr-[43px]">
        <svg viewBox="0 0 80 50" className="w-[80px] h-[50px] mt-[2px]" fill="#f5f5f5">
          {[5, 22.500, 40, 57.500, 75].map((x) => (
            <React.Fragment key={x}>
              <circle cx={x} cy="7" r="4.300" />
              <circle cx={x} cy="24.500" r="4.300" />
            </React.Fragment>
          ))}
          <circle cx="5" cy="42" r="4.300" />
          <rect x="18" y="38" width="44" height="8.600" rx="4" />
          <circle cx="75" cy="42" r="4.300" />
        </svg>
        <svg viewBox="0 0 72 46" className="w-[72px] h-[46px] mt-[5px]" {...svgBase} stroke="#f5f5f5" strokeWidth="8">
          <path d="M7 8 L36 36 L65 8" strokeLinejoin="miter" />
        </svg>
      </div>
    </div>
  );
}

export default function App() {
  return (
    <div className="w-[1440px] h-[2843px] overflow-hidden bg-[#090909] font-['Roboto','Noto_Sans',sans-serif]">
      <div className="bg-[#212e3d] bg-[radial-gradient(ellipse_390px_320px_at_1150px_330px,#2c2f51_0%,#2a2f4c_35%,#212e3d00_100%)]">
        <Header />
        <PlayerBar />
      </div>
      <Chat />
      <ReplyBar />
      <InputBar />
      <Toolbar />
      <Keyboard />
    </div>
  );
}
